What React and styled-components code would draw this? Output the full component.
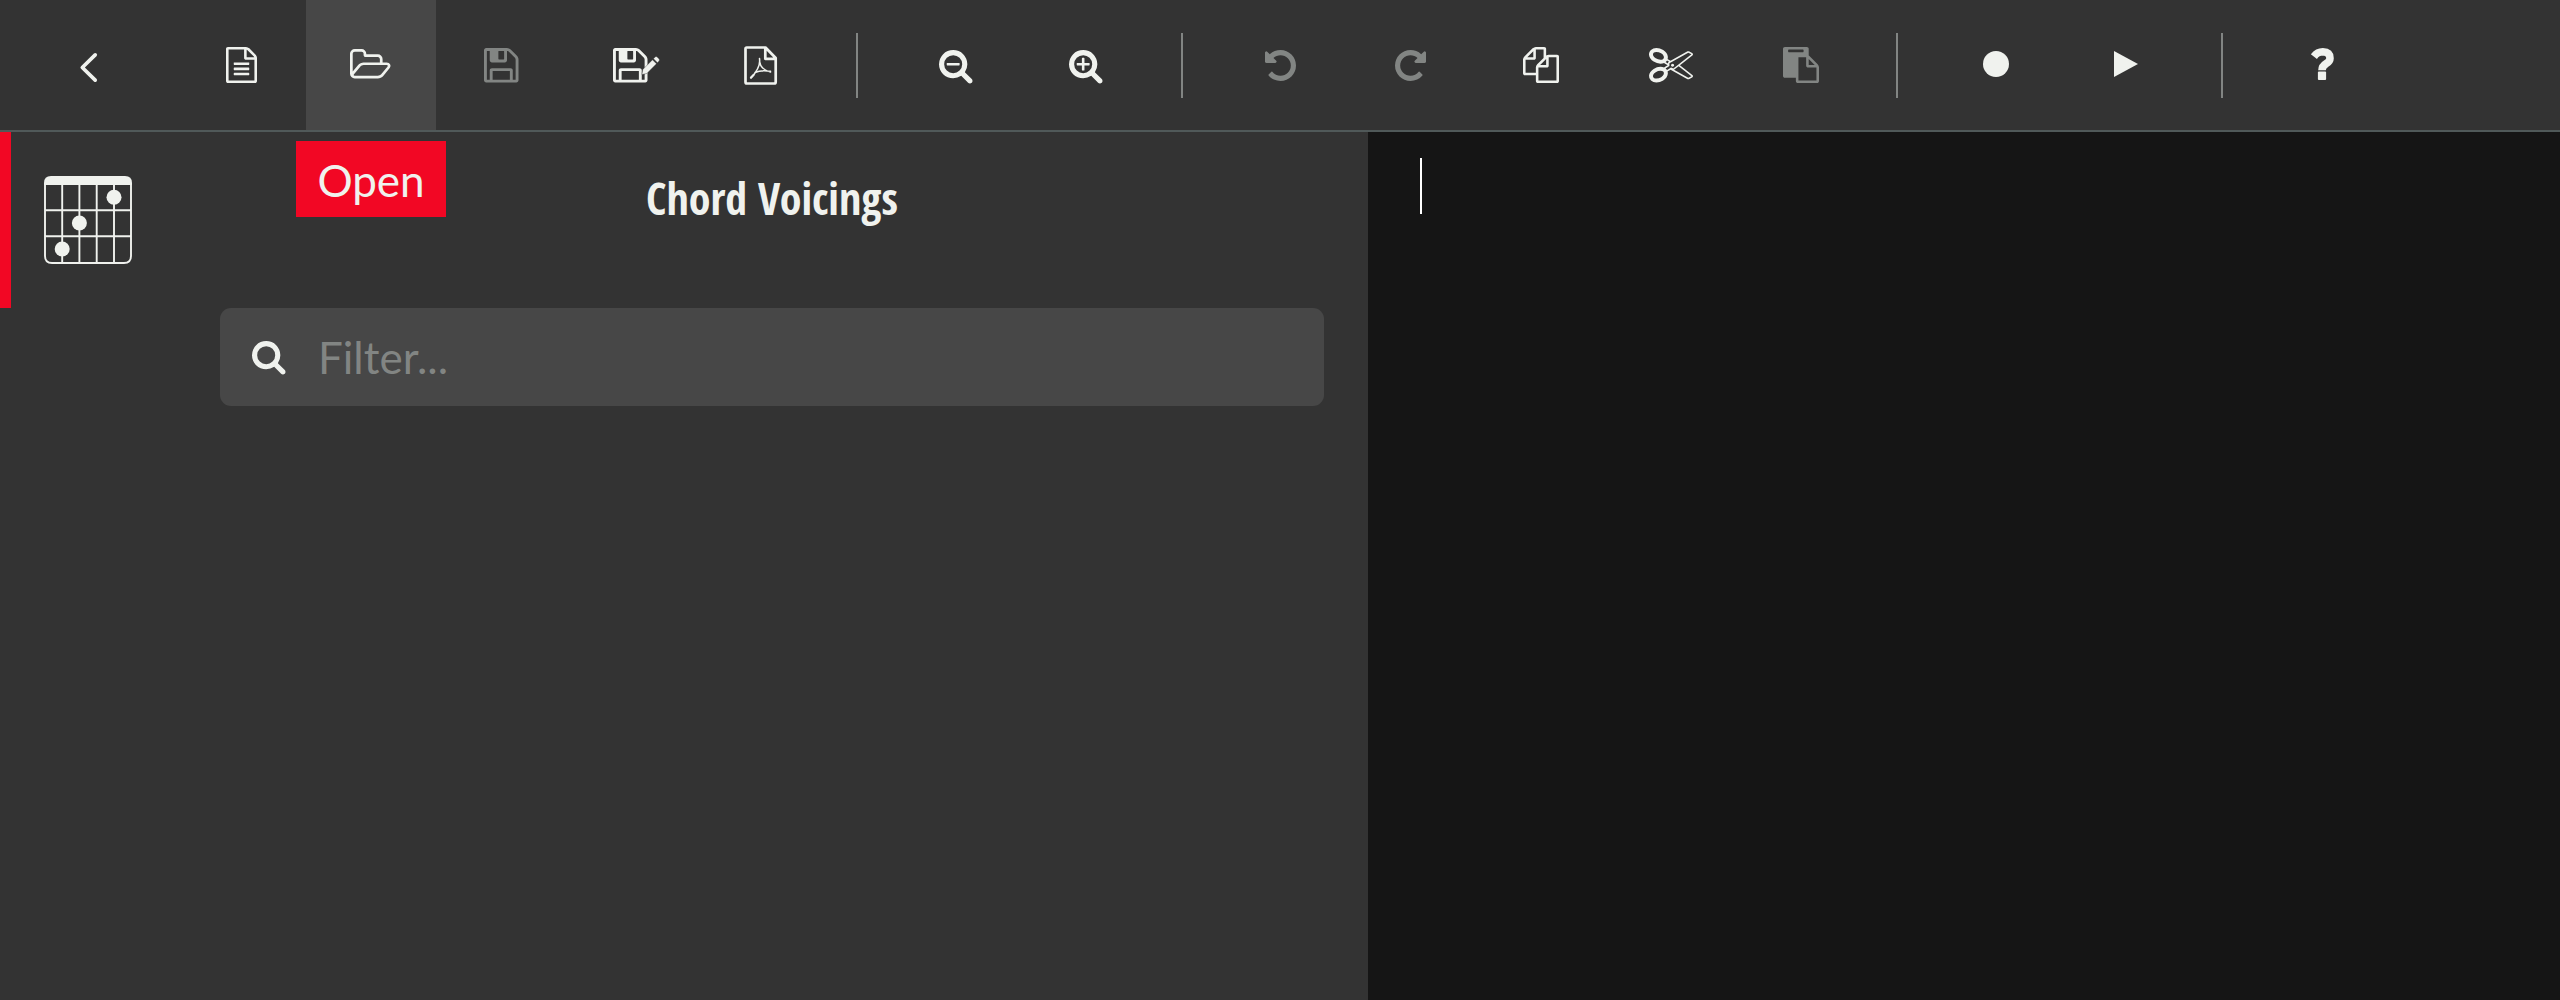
import React from "react";
import styled, { createGlobalStyle } from "styled-components";

const FG = "#f0f2ee";
const DIM = "#828583";

const Global = createGlobalStyle`
  html, body { margin: 0; background: #151515; }
  * { box-sizing: border-box; }
`;

const Page = styled.div`
  display: flex;
  flex-direction: column;
  width: 100%;
  height: 100vh;
  overflow: hidden;
  color: ${FG};
  font-family: Lato, "Noto Sans", sans-serif;
`;

const Toolbar = styled.header`
  display: flex;
  flex: none;
  height: 132px;
  background: #333333;
  border-bottom: 2px solid #505959;
`;

const ToolButton = styled.button`
  display: flex;
  align-items: flex-start;
  width: ${(p) => p.$width || 130}px;
  height: 130px;
  border: 0;
  padding: ${(p) => p.$top}px 0 0 ${(p) => p.$left}px;
  background: ${(p) => (p.$active ? "#474747" : "transparent")};
  color: ${(p) => (p.$disabled ? DIM : FG)};
`;

const Separator = styled.span`
  width: 2px;
  height: 65px;
  margin: 33px 33px 0 30px;
  background: ${DIM};
`;

const Glyph = styled.svg`
  display: block;
  flex: none;
  fill: currentColor;
  overflow: visible;
`;

const Main = styled.main`
  display: flex;
  flex: 1;
  min-height: 0;
`;

const Rail = styled.nav`
  width: 176px;
  background: #333333;
`;

const RailTab = styled.button`
  display: block;
  width: 100%;
  height: 176px;
  border: 0;
  border-left: 11px solid #f20724;
  padding: 0 0 1px 33px;
  background: transparent;
  color: ${FG};
`;

const Panel = styled.section`
  width: 1192px;
  padding: 42px 44px 44px;
  background: #333333;
`;

const Title = styled.h2`
  margin: 0;
  height: 134px;
  text-align: center;
  font: 700 44px/48px "Open Sans Condensed", "Open Sans", sans-serif;
  font-stretch: 75%;
`;

const FilterBox = styled.label`
  display: flex;
  align-items: flex-start;
  height: 98px;
  padding: 33px 32px 0;
  border-radius: 11px;
  background: #474747;
`;

const FilterInput = styled.input`
  flex: 1;
  height: 60px;
  margin: -14px 0 0 32.5px;
  border: 0;
  padding: 0;
  outline: 0;
  background: transparent;
  color: ${FG};
  font: 400 44px/60px Lato, sans-serif;
  &::placeholder { color: ${DIM}; opacity: 1; }
`;

const Editor = styled.section`
  flex: 1;
  padding: 26px 52px;
  background: #151515;
`;

const Caret = styled.div`
  width: 2px;
  height: 56px;
  background: #ffffff;
`;

const Tooltip = styled.div`
  position: absolute;
  left: 296px;
  top: 141px;
  width: 150px;
  height: 76px;
  background: #f20724;
  color: ${FG};
  text-align: center;
  font-size: 44px;
  line-height: 78px;
`;

const LENS = "M1216 832q0-185-131.500-316.500t-316.500-131.500-316.500 131.500-131.500 316.500 131.500 316.500 316.500 131.500 316.500-131.500 131.500-316.500zm512 832q0 53-37.500 90.500t-90.500 37.500q-54 0-90-38l-343-342q-179 124-399 124-143 0-273.500-55.500t-225-150-150-225-55.500-273.500 55.500-273.500 150-225 225-150 273.500-55.500 273.500 55.500 225 150 150 225 55.500 273.500q0 220-124 399l343 343q37 37 37 90z";
const UNDO = "M1664 896q0 156-61 298t-164 245-245 164-298 61q-172 0-327-72.500t-264-204.500q-7-10-6.500-22.500t8.500-20.500l137-138q10-9 25-9 16 2 23 12 73 95 179 147t225 52q104 0 198.500-40.500t163.500-109.500 109.500-163.500 40.500-198.500-40.500-198.500-109.500-163.500-163.500-109.500-198.500-40.500q-98 0-188 35.500t-160 101.500l137 138q31 30 14 69-17 40-59 40h-448q-26 0-45-19t-19-45v-448q0-42 40-59 39-17 69 14l130 129q107-101 244.500-156.500t284.500-55.500q156 0 298 61t245 164 164 245 61 298z";
const FLOPPY = "M512 1536h768v-384h-768v384zm896 0h128v-896q0-14-10-38.500t-20-34.500l-281-281q-10-10-34-20t-39-10v416q0 40-28 68t-68 28h-576q-40 0-68-28t-28-68v-416h-128v1280h128v-416q0-40 28-68t68-28h832q40 0 68 28t28 68v416zm-384-928v-320q0-13-9.500-22.500t-22.500-9.500h-192q-13 0-22.500 9.500t-9.500 22.500v320q0 13 9.500 22.500t22.500 9.500h192q13 0 22.500-9.500t9.500-22.500zm640 32v928q0 40-28 68t-68 28h-1344q-40 0-68-28t-28-68v-1344q0-40 28-68t68-28h928q40 0 88 20t76 48l280 280q28 28 48 76t20 88z";

// Every shape: view box, drawn size, and its contents.
const shapes = {
  back: ["0 0 17 29", 17, 29, <path d="M15.200 1.900 2.300 14.500 15.200 27.100" fill="none" stroke="currentColor" strokeWidth="3.700" strokeLinecap="round" strokeLinejoin="round" />],
  file: ["128 0 1536 1792", 31, 36, <path d="M1596 380q28 28 48 76t20 88v1152q0 40-28 68t-68 28h-1344q-40 0-68-28t-28-68v-1600q0-40 28-68t68-28h896q40 0 88 20t76 48zm-444-244v376h376q-10-29-22-41l-313-313q-12-12-41-22zm384 1528v-1024h-416q-40 0-68-28t-28-68v-416h-768v1536h1280zm-1024-864q0-14 9-23t23-9h704q14 0 23 9t9 23v64q0 14-9 23t-23 9h-704q-14 0-23-9t-9-23v-64zm736 224q14 0 23 9t9 23v64q0 14-9 23t-23 9h-704q-14 0-23-9t-9-23v-64q0-14 9-23t23-9h704zm0 256q14 0 23 9t9 23v64q0 14-9 23t-23 9h-704q-14 0-23-9t-9-23v-64q0-14 9-23t23-9h704z" />],
  folder: ["0 252 1909 1408", 40.500, 29.500, <path d="M1781 1055q0-35-53-35h-1088q-40 0-85.500 21.500t-71.500 52.500l-294 363q-18 24-18 40 0 35 53 35h1088q40 0 86-22t71-53l294-363q18-22 18-39zm-1141-163h768v-160q0-40-28-68t-68-28h-576q-40 0-68-28t-28-68v-64q0-40-28-68t-68-28h-320q-40 0-68 28t-28 68v853l256-315q44-53 116-87.500t140-34.500zm1269 163q0 62-46 120l-295 363q-43 53-116 87.500t-140 34.500h-1088q-92 0-158-66t-66-158v-960q0-92 66-158t158-66h320q92 0 158 66t66 158v32h544q92 0 158 66t66 158v160h192q54 0 99 24.500t67 70.500q15 32 15 68z" />],
  save: ["128 128 1536 1536", 34.500, 34.500, <path d={FLOPPY} />],
  saveAs: ["0 0 47 35", 47, 35, <>
    <path transform="translate(-2.870 -2.870) scale(.02246)" d={FLOPPY} />
    <path transform="translate(-.7 0)" d="M30.500 21.500 40.200 11.800l4 4-9.700 9.700-4.900 1zM41.200 10.800l1.600-1.900q1-.8 2 0l2 2q.8 1 0 2l-1.600 1.900z" stroke="#333333" strokeWidth=".4" />
  </>],
  pdf: ["0 0 33 39", 33, 39, <g fill="none" stroke="currentColor" strokeLinecap="round" strokeLinejoin="round">
    <path strokeWidth="2.700" d="M2.700 1.500H21.500L31.700 12V36q0 1.500-1.500 1.500H3Q1.500 37.500 1.500 36V3Q1.500 1.500 2.700 1.500ZM21.300 2V12.800H31" />
    <path strokeWidth="1.500" d="M15.500 12.500Q17 21 7 32M15.600 13Q15 23 26.500 26M11 26.500Q17 23.800 26.500 25.300" />
    <path strokeWidth="2.200" d="M7 31.500 9.500 29" />
  </g>],
  zoomOut: ["64 128 1664 1664", 33.500, 33.500, <path d={"M1088 800v64q0 13-9.500 22.500t-22.500 9.500h-576q-13 0-22.500-9.500t-9.500-22.500v-64q0-13 9.500-22.500t22.500-9.500h576q13 0 22.500 9.500t9.500 22.500z" + LENS} />],
  zoomIn: ["64 128 1664 1664", 33.500, 33.500, <path d={"M1088 800v64q0 13-9.500 22.500t-22.500 9.500h-224v224q0 13-9.500 22.500t-22.500 9.500h-64q-13 0-22.500-9.500t-9.500-22.500v-224h-224q-13 0-22.500-9.500t-9.500-22.500v-64q0-13 9.500-22.500t22.500-9.500h224v-224q0-13 9.500-22.500t22.500-9.500h64q13 0 22.500 9.500t9.500 22.500v224h224q13 0 22.500 9.500t9.500 22.500z" + LENS} />],
  search: ["64 128 1664 1664", 33.500, 33.500, <path d={LENS} />],
  undo: ["128 128 1536 1536", 31, 31, <path d={UNDO} />],
  redo: ["128 128 1536 1536", 31, 31, <path transform="matrix(-1 0 0 1 1792 0)" d={UNDO} />],
  copy: ["0 0 1792 1792", 36, 36, <path d="M1696 384q40 0 68 28t28 68v1216q0 40-28 68t-68 28h-960q-40 0-68-28t-28-68v-288h-544q-40 0-68-28t-28-68v-672q0-40 20-88t48-76l408-408q28-28 76-48t88-20h416q40 0 68 28t28 68v328q68-40 128-40h416zm-544 213l-299 299h299v-299zm-640-384l-299 299h299v-299zm196 647l316-316v-416h-384v416q0 40-28 68t-68 28h-416v640h512v-256q0-40 20-88t48-76zm956 804v-1152h-384v416q0 40-28 68t-68 28h-416v640h896z" />],
  cut: ["0 256 1792 1408", 44, 34.500, <path d="M960 896q26 0 45 19t19 45-19 45-45 19-45-19-19-45 19-45 45-19zm300 64l507 398q28 20 25 56-5 35-35 51l-128 64q-13 7-29 7-17 0-31-8l-690-387-110 66q-8 4-12 5 14 49 10 97-7 77-56 147.500t-132 123.500q-132 84-277 84-136 0-222-78-90-84-79-207 7-76 56-147t131-124q132-84 278-84 83 0 151 31 9-13 22-22l122-73-122-73q-13-9-22-22-68 31-151 31-146 0-278-84-82-53-131-124t-56-147q-5-59 15.500-113t63.500-93q85-79 222-79 145 0 277 84 83 52 132 123t56 148q4 48-10 97 4 1 12 5l110 66 690-387q14-8 31-8 16 0 29 7l128 64q30 16 35 51 3 36-25 56zm-681-260q46-42 21-108t-106-117q-92-59-192-59-74 0-113 36-46 42-21 108t106 117q92 59 192 59 74 0 113-36zm-85 745q81-51 106-117t-21-108q-39-36-113-36-100 0-192 59-81 51-106 117t21 108q39 36 113 36 100 0 192-59zm178-613l96 58v-11q0-36 33-56l14-8-79-44-26 26q-3 3-10 11t-12 12q-2 2-4 3.500t-3 2.500zm224 224l96 32 736-576-128-64-768 431v113l-160 96 9 8q2 2 7 6 4 4 11 12t11 12l26 26zm704 416l128-64-520-408-177 138q-2 3-13 7z" />],
  paste: ["0 0 1792 1792", 36, 36, <path d="M768 1664h896v-640h-416q-40 0-68-28t-28-68v-416h-384v1152zm256-1440v-64q0-13-9.500-22.500t-22.500-9.500h-704q-13 0-22.500 9.500t-9.500 22.500v64q0 13 9.500 22.500t22.500 9.500h704q13 0 22.500-9.500t9.500-22.500zm256 672h299l-299-299v299zm512 128v672q0 40-28 68t-68 28h-960q-40 0-68-28t-28-68v-160h-544q-40 0-68-28t-28-68v-1344q0-40 28-68t68-28h1088q40 0 68 28t28 68v328q21 13 36 28l408 408q28 28 48 76t20 88z" />],
  record: ["0 0 26 26", 26, 26, <circle cx="13" cy="13" r="13" />],
  play: ["0 0 24 26", 24, 26, <path d="M0 0 24 13 0 26z" />],
  help: ["0 0 23 32", 23, 32, <>
    <path d="M2.900 8.600Q6.500 3.800 11.800 3.800 19 4 19 10.200 19 13.300 15.300 15.600 11 18.200 11 22.300" fill="none" stroke="currentColor" strokeWidth="7.600" />
    <rect x="6.900" y="23.600" width="8.200" height="8.400" rx="1" />
  </>],
  chords: ["0 0 88 88", 88, 88, <>
    <path d="M0 9V7Q0 0 7 0H81Q88 0 88 7V9Z" />
    <path fill="none" stroke="currentColor" strokeWidth="1.900" d="M1 8V80Q1 87 8 87H80Q87 87 87 80V8M18.200 8V87M35.400 8V87M52.700 8V87M70 8V87M1 34.200H87M1 60.200H87" />
    <circle cx="70" cy="21.300" r="7.500" /><circle cx="35.400" cy="47" r="7.500" /><circle cx="18.200" cy="73" r="7.500" />
  </>],
};

function Icon({ name }) {
  const [viewBox, width, height, body] = shapes[name];
  return <Glyph viewBox={viewBox} width={width} height={height} preserveAspectRatio="none" aria-hidden="true">{body}</Glyph>;
}

const tools = [
  { icon: "back", label: "Back", left: 79.800, top: 52.600, width: 176 },
  { icon: "file", label: "New", left: 49.500, top: 47 },
  { icon: "folder", label: "Open", left: 44.300, top: 49.200, active: true },
  { icon: "save", label: "Save", left: 47.600, top: 48.300, disabled: true },
  { icon: "saveAs", label: "Save as", left: 47.200, top: 48.300 },
  { icon: "pdf", label: "Export PDF", left: 48.300, top: 46 },
  null,
  { icon: "zoomOut", label: "Zoom out", left: 48.200, top: 49.500 },
  { icon: "zoomIn", label: "Zoom in", left: 48.200, top: 49.500 },
  null,
  { icon: "undo", label: "Undo", left: 49.300, top: 49.700, disabled: true },
  { icon: "redo", label: "Redo", left: 49.300, top: 49.700, disabled: true },
  { icon: "copy", label: "Copy", left: 47, top: 47 },
  { icon: "cut", label: "Cut", left: 43, top: 48.300 },
  { icon: "paste", label: "Paste", left: 46.700, top: 47, disabled: true },
  null,
  { icon: "record", label: "Record", left: 52, top: 51 },
  { icon: "play", label: "Play", left: 53, top: 51 },
  null,
  { icon: "help", label: "Help", left: 55, top: 48.200 },
];

export default function App() {
  return (
    <Page>
      <Global />
      <Toolbar>
        {tools.map((t, i) => t ? (
          <ToolButton key={i} aria-label={t.label} $left={t.left} $top={t.top} $width={t.width} $active={t.active} $disabled={t.disabled}>
            <Icon name={t.icon} />
          </ToolButton>
        ) : <Separator key={i} />)}
      </Toolbar>
      <Main>
        <Rail>
          <RailTab aria-label="Chord Voicings"><Icon name="chords" /></RailTab>
        </Rail>
        <Panel>
          <Title>Chord Voicings</Title>
          <FilterBox>
            <Icon name="search" />
            <FilterInput placeholder="Filter..." />
          </FilterBox>
        </Panel>
        <Editor><Caret /></Editor>
      </Main>
      <Tooltip role="tooltip">Open</Tooltip>
    </Page>
  );
}
